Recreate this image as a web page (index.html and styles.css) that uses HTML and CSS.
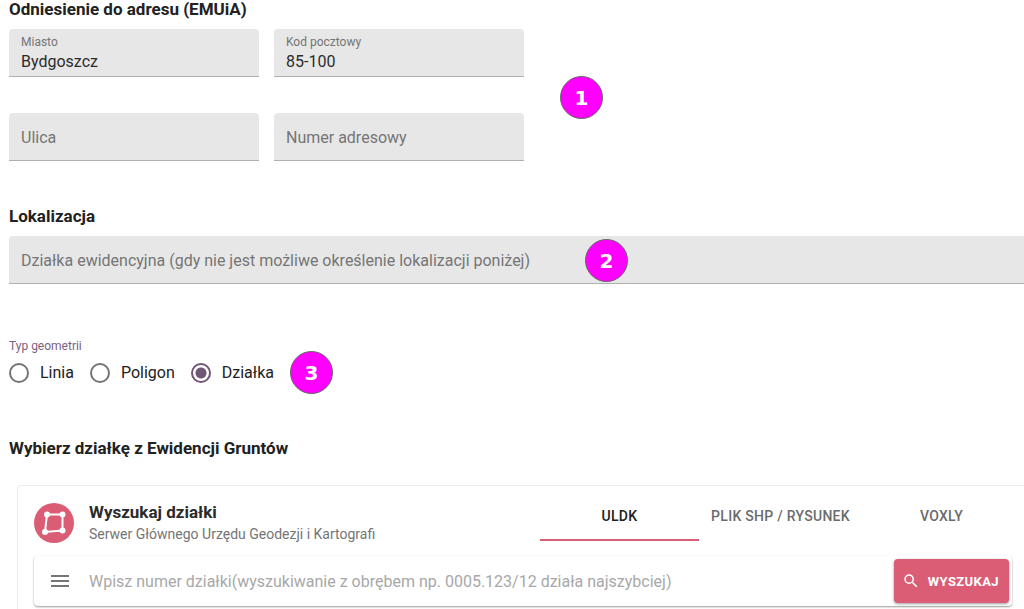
FILE: index.html
```html
<!DOCTYPE html>
<html lang="pl">
<head>
    <meta charset="utf-8">
    <meta name="viewport" content="width=device-width, initial-scale=1">
    <title>Lokalizacja</title>
    <link rel="stylesheet" href="styles.css">
</head>
<body>
    <form class="page">
        <section class="address">
            <h2 class="heading">Odniesienie do adresu (EMUiA)</h2>
            <div class="address-row">
                <div class="address-fields">
                    <div class="field">
                        <label class="field-label" for="city">Miasto</label>
                        <input class="field-input" type="text" id="city" value="Bydgoszcz">
                    </div>
                    <div class="field">
                        <label class="field-label" for="zip">Kod pocztowy</label>
                        <input class="field-input" type="text" id="zip" value="85-100">
                    </div>
                    <div class="field">
                        <input class="field-input" type="text" aria-label="Ulica" placeholder="Ulica">
                    </div>
                    <div class="field">
                        <input class="field-input" type="text" aria-label="Numer adresowy" placeholder="Numer adresowy">
                    </div>
                </div>
                <span class="step">1</span>
            </div>
        </section>

        <section class="location">
            <h2 class="heading">Lokalizacja</h2>
            <div class="field field-wide">
                <input class="field-input" type="text" aria-label="Działka ewidencyjna" placeholder="Działka ewidencyjna (gdy nie jest możliwe określenie lokalizacji poniżej)">
                <span class="step step-over">2</span>
            </div>
        </section>

        <fieldset class="geometry">
            <legend class="geometry-title">Typ geometrii</legend>
            <div class="geometry-options">
                <label class="option"><input class="radio" type="radio" name="geometry"><span>Linia</span></label>
                <label class="option"><input class="radio" type="radio" name="geometry"><span>Poligon</span></label>
                <label class="option"><input class="radio" type="radio" name="geometry" checked><span>Działka</span></label>
                <span class="step">3</span>
            </div>
        </fieldset>

        <section class="parcel">
            <h2 class="heading">Wybierz działkę z Ewidencji Gruntów</h2>
            <div class="card">
                <div class="card-header">
                    <div class="brand">
                        <svg class="logo" viewBox="0 0 40 40" aria-hidden="true">
                            <circle cx="20" cy="20" r="20" fill="#da5d75"/>
                            <path d="M13 11.500 L28.500 11.500 L28.500 27.500 L11 29 Z" fill="none" stroke="#fff" stroke-width="2"/>
                            <g fill="#fff">
                                <circle cx="13" cy="11.500" r="3"/>
                                <circle cx="28.500" cy="11.500" r="3"/>
                                <circle cx="28.500" cy="27.500" r="3"/>
                                <circle cx="11" cy="29" r="3"/>
                            </g>
                        </svg>
                        <div class="card-text">
                            <h3 class="card-title">Wyszukaj działki</h3>
                            <p class="card-subtitle">Serwer Głównego Urzędu Geodezji i Kartografi</p>
                        </div>
                    </div>
                    <div class="tabs" role="tablist">
                        <button class="tab tab-active" type="button" role="tab" aria-selected="true">ULDK</button>
                        <button class="tab" type="button" role="tab" aria-selected="false">PLIK SHP / RYSUNEK</button>
                        <button class="tab" type="button" role="tab" aria-selected="false">VOXLY</button>
                    </div>
                </div>
                <div class="search">
                    <button class="menu-btn" type="button" aria-label="Menu">
                        <svg width="24" height="24" viewBox="0 0 24 24" fill="#757575"><path d="M3 18h18v-2H3v2zm0-5h18v-2H3v2zm0-7v2h18V6H3z"/></svg>
                    </button>
                    <input class="search-input" type="text" aria-label="Numer działki" placeholder="Wpisz numer działki(wyszukiwanie z obrębem np. 0005.123/12 działa najszybciej)">
                    <button class="search-btn" type="button">
                        <svg width="18" height="18" viewBox="0 0 24 24" fill="#fff"><path d="M15.5 14h-.79l-.28-.27A6.471 6.471 0 0 0 16 9.500 6.500 6.500 0 1 0 9.500 16c1.610 0 3.090-.59 4.230-1.570l.27.28v.79l5 4.990L20.490 19l-4.990-5zm-6 0C7.010 14 5 11.990 5 9.500S7.010 5 9.500 5 14 7.010 14 9.500 11.990 14 9.500 14z"/></svg>
                        <span>WYSZUKAJ</span>
                    </button>
                </div>
            </div>
        </section>
    </form>
</body>
</html>
```

FILE: styles.css
```css
* {
    box-sizing: border-box;
}

body {
    margin: 0;
    overflow: hidden;
    background: #fff;
    color: #212121;
    font-family: Roboto, "Liberation Sans", sans-serif;
    font-size: 16px;
}

input,
button {
    font-family: inherit;
    font-size: 16px;
}

.page {
    padding-left: 9px;
}

.heading {
    margin: 0;
    font-size: 17px;
    line-height: 20px;
    font-weight: 700;
}

/* address fields */
.address {
    display: flex;
    flex-direction: column;
    gap: 10px;
}

.address .heading {
    line-height: 19px;
}

.address-row {
    display: flex;
    align-items: center;
    gap: 36px;
}

.address-row .step {
    margin-top: 5px;
}

.address-fields {
    display: grid;
    grid-template-columns: 1fr 1fr;
    gap: 36px 15px;
    flex: 0 1 515px;
}

.field {
    position: relative;
    display: flex;
    flex-direction: column;
    justify-content: center;
    height: 48px;
    padding: 2px 12px 0;
    background: #e7e7e7;
    border-bottom: 1px solid #b0b0b0;
    border-radius: 4px 4px 0 0;
}

.field-label {
    color: #757575;
    font-size: 12px;
    line-height: 16px;
}

.field-input {
    width: 100%;
    padding: 0;
    border: none;
    outline: none;
    background: transparent;
    color: #2b2b2b;
    line-height: 24px;
}

.field-input::placeholder {
    color: #757575;
}

/* numbered markers */
.step {
    display: flex;
    flex: none;
    align-items: center;
    justify-content: center;
    width: 43px;
    height: 43px;
    border: 1px solid #666;
    border-radius: 50%;
    background: #f0f;
    color: #fff;
    font-family: "DejaVu Sans", sans-serif;
    font-size: 20px;
    font-weight: 700;
}

.step-over {
    position: absolute;
    top: 3px;
    left: 576px;
}

/* location */
.location {
    display: flex;
    flex-direction: column;
    gap: 10px;
    margin-top: 45px;
}

.field-wide {
    border-top-right-radius: 0;
}

/* geometry type */
.geometry {
    margin: 54px 0 0;
    padding: 0;
    border: none;
}

.geometry-title {
    padding: 0;
    color: #7b6180;
    font-size: 12px;
    line-height: 16px;
}

.geometry-options {
    display: flex;
    align-items: center;
    gap: 16px;
    margin-top: -3px;
}

.option {
    display: flex;
    align-items: center;
    gap: 11px;
}

.radio {
    appearance: none;
    width: 20px;
    height: 20px;
    margin: 0;
    border: 2px solid #757575;
    border-radius: 50%;
}

.radio:checked {
    border-color: #725677;
    background: radial-gradient(circle, #725677 5px, transparent 6px);
}

/* parcel search */
.parcel {
    display: flex;
    flex-direction: column;
    gap: 27px;
    margin-top: 44px;
}

.card {
    margin-left: 8px;
    padding: 7px 0 16px 16px;
    border: 1px solid #ebebeb;
    border-width: 1px 0 0 1px;
    border-radius: 4px 0 0 0;
}

.card-header {
    display: flex;
    align-items: flex-start;
    justify-content: space-between;
    padding-right: 3px;
}

.brand {
    display: flex;
    align-items: center;
    gap: 15px;
    padding-top: 8px;
}

.logo {
    flex: none;
    width: 40px;
    height: 40px;
}

.card-title {
    margin: 0;
    color: #2b2b2b;
    font-size: 17px;
    line-height: 22px;
    font-weight: 700;
}

.card-subtitle {
    margin: 0;
    color: #757575;
    font-size: 14px;
    line-height: 22px;
}

.tabs {
    display: flex;
    gap: 2px;
}

.tab {
    flex: none;
    min-width: 159px;
    height: 48px;
    padding: 0 8px;
    border: none;
    border-bottom: 2px solid transparent;
    background: none;
    color: #6b6b6b;
    font-size: 14px;
    font-weight: 500;
    letter-spacing: 0.02em;
}

.tab-active {
    border-color: #da5d75;
    color: #212121;
}

.search {
    display: flex;
    align-items: center;
    height: 50px;
    margin: 11px 12px 0 0;
    padding: 3px;
    border-radius: 4px;
    box-shadow: 0 1px 2px rgba(0, 0, 0, 0.4);
}

.menu-btn {
    display: flex;
    padding: 11px;
    border: none;
    background: none;
}

.search-input {
    flex: 1;
    min-width: 0;
    margin-left: 6px;
    padding: 0;
    border: none;
    outline: none;
    background: transparent;
}

.search-input::placeholder {
    color: #a8a8a8;
}

.search-btn {
    display: flex;
    align-items: center;
    gap: 8px;
    height: 44px;
    padding: 0 10px 0 8px;
    border: none;
    border-radius: 4px;
    background: #da5d75;
    color: #fff;
    font-size: 13px;
    font-weight: 700;
    letter-spacing: 0.03em;
    box-shadow: 0 1px 3px rgba(0, 0, 0, 0.4);
}
```
